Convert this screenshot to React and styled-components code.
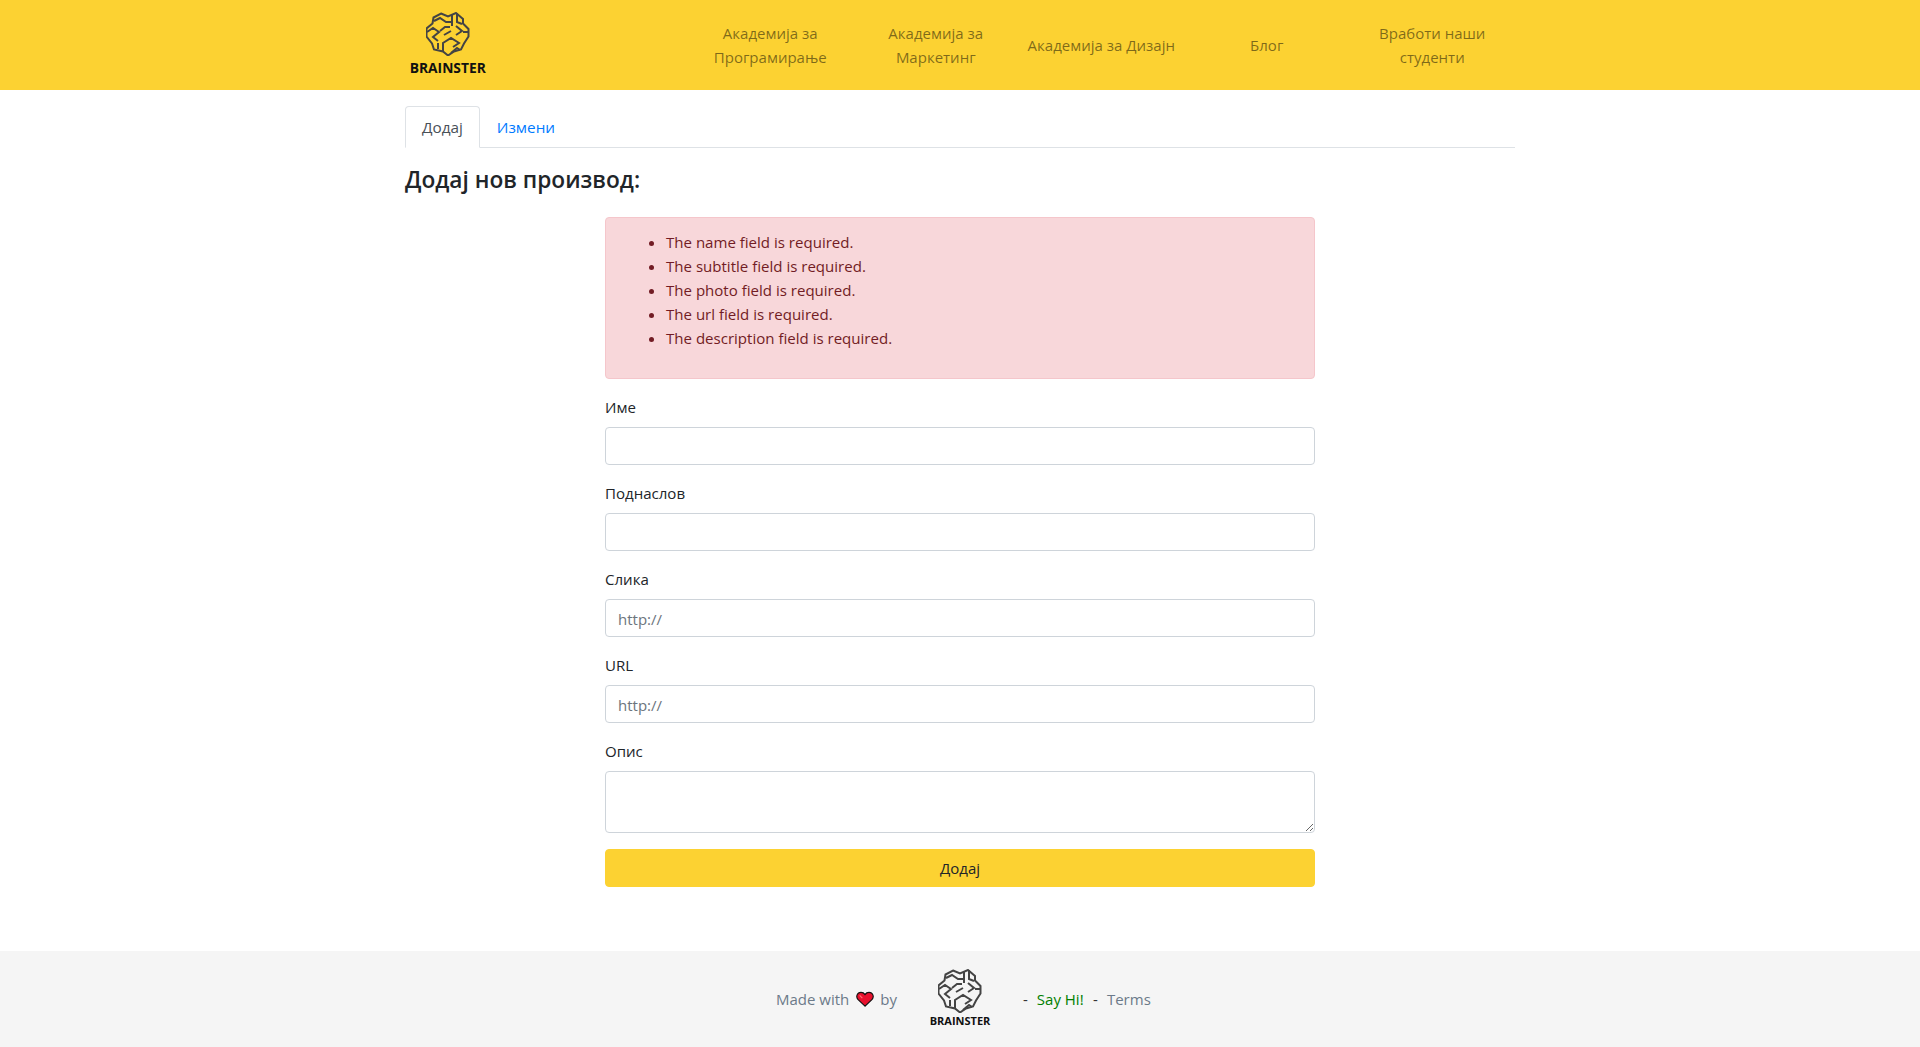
import React from 'react';
import styled, { createGlobalStyle } from 'styled-components';

const Global = createGlobalStyle`
  html, body { margin: 0; padding: 0; background: #fff; }
  body { font-family: "Open Sans", "Noto Sans", sans-serif; font-size: 15px; line-height: 24px; color: #212529; }
  * { box-sizing: border-box; }
`;
const Page = styled.div`min-height: 1047px; display: flex; flex-direction: column;`;
const Header = styled.header`height: 90px; background: #fcd232;`;
const HeaderInner = styled.div`width: 1110px; margin: 0 auto; display: flex; height: 100%;`;
const Brand = styled.a`width: 88px; display: flex; flex-direction: column; align-items: center; padding-top: 12px; gap: 4px;`;
const BrandName = styled.span`font-weight: 700; font-size: ${p => p.$small ? 11 : 13.8}px; line-height: 16px; color: #111;`;
const Nav = styled.nav`margin-left: 197px; display: flex; align-items: center;`;
const NavLink = styled.a`width: 165.500px; text-align: center; font-size: 15px; line-height: 24px; color: rgba(0,0,0,.5);`;
const Main = styled.main`flex: 1; width: 1110px; margin: 0 auto; padding-top: 16px;`;
const Tabs = styled.div`display: flex; height: 42px; border-bottom: 1px solid #dee2e6;`;
const Tab = styled.a`height: 42px; padding: 8px 16px; font-size: 15.3px; line-height: 24px; border: 1px solid ${p => p.$active ? '#dee2e6' : 'transparent'}; border-bottom-color: ${p => p.$active ? '#fff' : 'transparent'}; border-radius: 4px 4px 0 0; color: ${p => p.$active ? '#495057' : '#007bff'}; background: ${p => p.$active ? '#fff' : 'transparent'};`;
const Title = styled.h4`margin: 18px 0 0; font-size: 22.7px; line-height: 28px; font-weight: 600; color: #212529;`;
const Form = styled.form`width: 710px; margin: 23px auto 0;`;
const Alert = styled.div`height: 162px; background: #f8d7da; border: 1px solid #f5c6cb; border-radius: 4px; color: #721c24; padding: 12px 20px; margin-bottom: 16px;`;
const Errors = styled.ul`margin: 0; padding-left: 40px; font-size: 15.05px; line-height: 24px;`;
const Field = styled.div`margin-bottom: 16px;`;
const Label = styled.label`display: block; margin-bottom: 8px; font-size: 15.05px; line-height: 24px; color: #212529;`;
const Input = styled.input`display: block; width: 100%; height: 38px; padding: 7px 12px 5px; border: 1px solid #ced4da; border-radius: 4px; font: inherit; font-size: 15px; color: #495057; background: #fff; &::placeholder { color: #6c757d; opacity: 1; }`;
const Area = styled.textarea`display: block; width: 100%; height: 62px; padding: 6px 12px; border: 1px solid #ced4da; border-radius: 4px; font: inherit; background: #fff; resize: vertical;`;
const Submit = styled.button`display: block; width: 100%; height: 38px; border: 1px solid #fcd232; border-radius: 4px; background: #fcd232; color: #212529; font: inherit; font-size: 15px; text-align: center; padding: 0;`;
const Footer = styled.footer`height: 96px; background: #f5f5f5; display: flex; align-items: center; justify-content: center; font-size: 15px; color: #6c7a89;`;
const FootSide = styled.div`flex: 1; display: flex; align-items: center; justify-content: ${p => p.$end ? 'flex-end' : 'flex-start'};`;
const FootBrand = styled.div`display: flex; flex-direction: column; align-items: center; width: 60px; margin: 0 33px;`;
const Sep = styled.span`color: #333; margin: 0 9px 0 9.500px;`;
const FirstSep = styled(Sep)`margin-left: 0;`;
const Green = styled.a`color: #008000;`;
const HeartWrap = styled.span`display: inline-flex; margin: 0 6px 0 7px;`;

const Brain = ({ color = '#444' }) => (
  <svg width="44" height="44" viewBox="0 0 44 44" fill="none" stroke={color} strokeWidth="2" strokeLinejoin="miter">
    <path d="M15 1.500l7 3 8-3.500 7 6v4.500l5.500 5.500v7.500l-4.500 7-3 6-7 2-6 4-5-4-9-2-2-6-5.500-7v-8l6-5 1-6z" />
    <path d="M8 9l6-3 6 4h6M26 3v11M31 1v9l5 2M1 20l6-4 6 4-6 5 5 4M18 23l7-4M14 19l5-4h5M30 14l6 5-6 4M43 20h-6M17 39v-8l8-5 8 5-6 4M12 37v-6M25 41l6-5 3 2" />
  </svg>
);

const Heart = () => (
  <svg width="18" height="16" viewBox="0 0 20 18">
    <path d="M10 17 2 9.500C-.5 6.500 1 1.500 5.500 1.500c2 0 3.500 1 4.500 2.500 1-1.500 2.500-2.500 4.500-2.500 4.500 0 6 5 3.500 8z" fill="#e8112d" stroke="#111" strokeWidth="1.300" />
    <path d="M4 5l3 3" stroke="#f77" strokeWidth="1.200" />
  </svg>
);

const links = [['Академија за', 'Програмирање'], ['Академија за', 'Маркетинг'], ['Академија за Дизајн'], ['Блог'], ['Вработи наши', 'студенти']];
const errors = ['name', 'subtitle', 'photo', 'url', 'description'];

export default function App() {
  return (
    <Page>
      <Global />
      <Header>
        <HeaderInner>
          <Brand><Brain /><BrandName>BRAINSTER</BrandName></Brand>
          <Nav>
            {links.map(l => <NavLink key={l[0] + l.length}>{l.map((t, i) => <React.Fragment key={t}>{i > 0 && <br />}{t}</React.Fragment>)}</NavLink>)}
          </Nav>
        </HeaderInner>
      </Header>
      <Main>
        <Tabs><Tab $active>Додај</Tab><Tab>Измени</Tab></Tabs>
        <Title>Додај нов производ:</Title>
        <Form onSubmit={e => e.preventDefault()}>
          <Alert><Errors>{errors.map(e => <li key={e}>The {e} field is required.</li>)}</Errors></Alert>
          <Field><Label>Име</Label><Input /></Field>
          <Field><Label>Поднаслов</Label><Input /></Field>
          <Field><Label>Слика</Label><Input placeholder="http://" /></Field>
          <Field><Label>URL</Label><Input placeholder="http://" /></Field>
          <Field><Label>Опис</Label><Area /></Field>
          <Submit type="button">Додај</Submit>
        </Form>
      </Main>
      <Footer>
        <FootSide $end>Made with<HeartWrap><Heart /></HeartWrap>by</FootSide>
        <FootBrand><Brain /><BrandName $small>BRAINSTER</BrandName></FootBrand>
        <FootSide><FirstSep>-</FirstSep><Green>Say Hi!</Green><Sep>-</Sep><span>Terms</span></FootSide>
      </Footer>
    </Page>
  );
}
